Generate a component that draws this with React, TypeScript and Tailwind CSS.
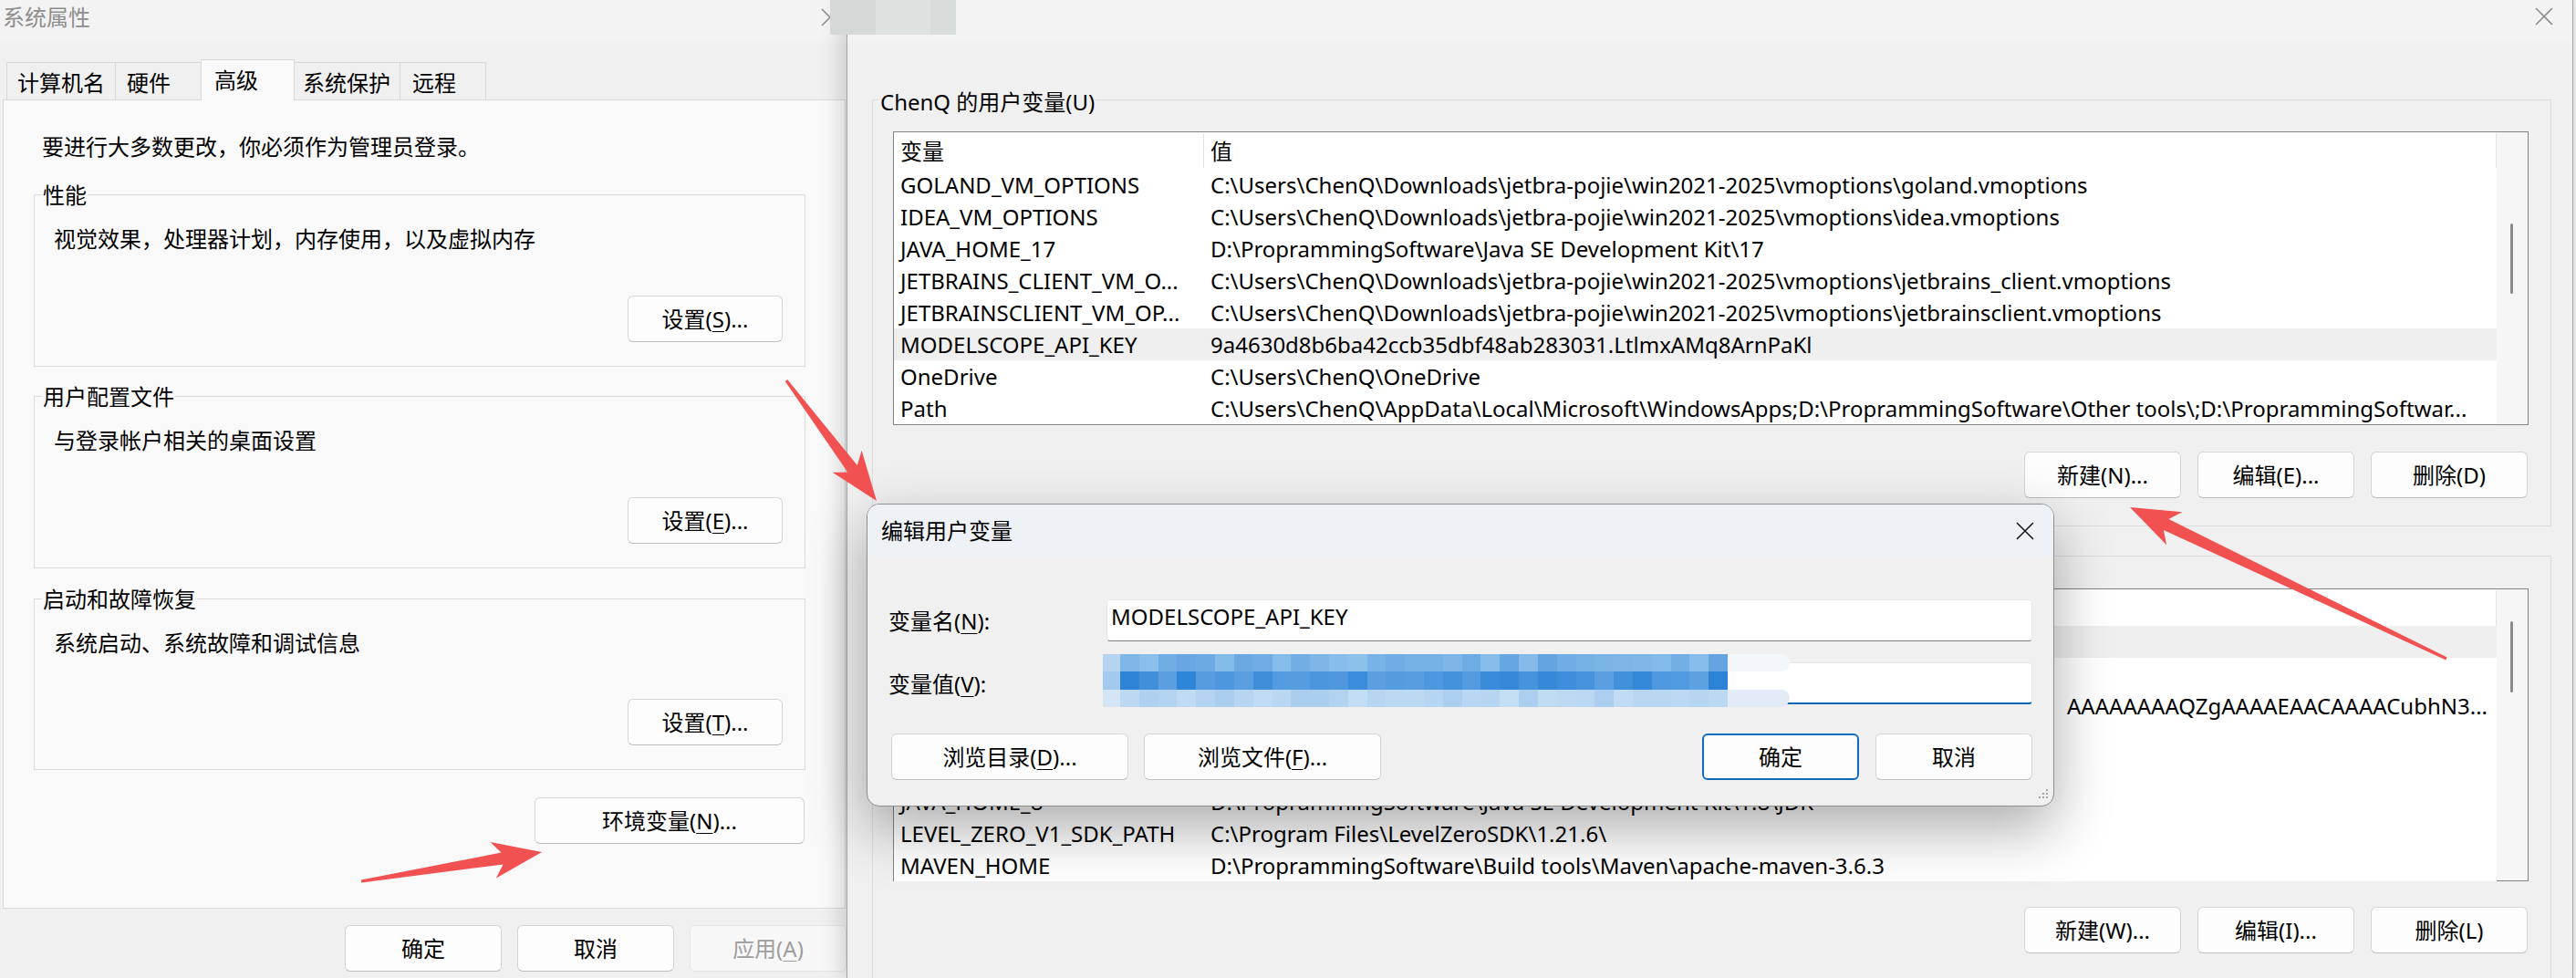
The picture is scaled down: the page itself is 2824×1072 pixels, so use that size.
import React from "react";

type Row = { name: string; value: string; selected?: boolean; alignEnd?: boolean };

const USER_ROWS: Row[] = [
  { name: "GOLAND_VM_OPTIONS", value: "C:\\Users\\ChenQ\\Downloads\\jetbra-pojie\\win2021-2025\\vmoptions\\goland.vmoptions" },
  { name: "IDEA_VM_OPTIONS", value: "C:\\Users\\ChenQ\\Downloads\\jetbra-pojie\\win2021-2025\\vmoptions\\idea.vmoptions" },
  { name: "JAVA_HOME_17", value: "D:\\ProprammingSoftware\\Java SE Development Kit\\17" },
  { name: "JETBRAINS_CLIENT_VM_O...", value: "C:\\Users\\ChenQ\\Downloads\\jetbra-pojie\\win2021-2025\\vmoptions\\jetbrains_client.vmoptions" },
  { name: "JETBRAINSCLIENT_VM_OP...", value: "C:\\Users\\ChenQ\\Downloads\\jetbra-pojie\\win2021-2025\\vmoptions\\jetbrainsclient.vmoptions" },
  { name: "MODELSCOPE_API_KEY", value: "9a4630d8b6ba42ccb35dbf48ab283031.LtlmxAMq8ArnPaKl", selected: true },
  { name: "OneDrive", value: "C:\\Users\\ChenQ\\OneDrive" },
  { name: "Path", value: "C:\\Users\\ChenQ\\AppData\\Local\\Microsoft\\WindowsApps;D:\\ProprammingSoftware\\Other tools\\;D:\\ProprammingSoftwar..." },
];

// System variables: the rows under the edit dialog are hidden in the reference.
const SYS_ROWS: Row[] = [
  { name: "", value: "", selected: true },
  { name: "", value: "" },
  { name: "", value: "AAAAAAAAQZgAAAAEAACAAAACubhN3...", alignEnd: true },
  { name: "", value: "" },
  { name: "", value: "" },
  { name: "JAVA_HOME_8", value: "D:\\ProprammingSoftware\\Java SE Development Kit\\1.8\\JDK" },
  { name: "LEVEL_ZERO_V1_SDK_PATH", value: "C:\\Program Files\\LevelZeroSDK\\1.21.6\\" },
  { name: "MAVEN_HOME", value: "D:\\ProprammingSoftware\\Build tools\\Maven\\apache-maven-3.6.3" },
];

function Ul({ children }: { children: React.ReactNode }) {
  return <span className="underline decoration-1 underline-offset-[4px]">{children}</span>;
}

function CloseX({ color }: { color: string }) {
  return (
    <svg width="20" height="20" viewBox="0 0 20 20" className="block">
      <path d="M1 1L19 19M19 1L1 19" stroke={color} strokeWidth="1.6" fill="none" />
    </svg>
  );
}

type BtnKind = "normal" | "primary" | "disabled";

function Btn({ children, kind = "normal", className = "" }: { children: React.ReactNode; kind?: BtnKind; className?: string }) {
  const k =
    kind === "primary"
      ? "border-2 border-[#0f6cbd] bg-[#fdfdfd] text-black"
      : kind === "disabled"
      ? "border border-[#e6e6e6] bg-[#f7f7f7] text-[#9e9e9e]"
      : "border border-[#d5d5d5] border-b-[#bdbdbd] bg-[#fdfdfd] text-black";
  return (
    <div className={`flex shrink-0 items-center justify-center rounded-[6px] text-[24px] leading-[35px] ${k} ${className}`}>
      {children}
    </div>
  );
}

function PanelGroup({ label, text, button, className }: { label: string; text: string; button: React.ReactNode; className: string }) {
  return (
    <div className={`relative ml-[33px] flex w-[846px] flex-col border border-[#dcdcdc] ${className}`}>
      <span className="absolute left-[8px] top-[-18px] bg-[#f9f9f9] px-[1px] leading-[35px]">{label}</span>
      <p className="pl-[21px] pt-[30px] leading-[35px]">{text}</p>
      <div className="mt-auto flex justify-end pb-[26px] pr-[24px]">{button}</div>
    </div>
  );
}

function SystemProperties() {
  const tabs = [
    { label: "计算机名", cls: "w-[120px] pl-[11px] h-[41px] bg-[#f0f0f0]" },
    { label: "硬件", cls: "w-[95px] pl-[12px] h-[41px] bg-[#f0f0f0] -ml-[1px]" },
    { label: "高级", cls: "w-[103px] pl-[14px] h-[45px] bg-[#f9f9f9] -ml-[1px] -mb-[1px] relative z-10" },
    { label: "系统保护", cls: "w-[117px] pl-[9px] h-[41px] bg-[#f0f0f0] -ml-[1px]" },
    { label: "远程", cls: "w-[95px] pl-[13px] h-[41px] bg-[#f0f0f0] -ml-[1px]" },
  ];
  return (
    <div className="absolute left-0 top-0 flex h-[1072px] w-[930px] flex-col bg-[#f0f0f0] text-[24px]">
      <div className="flex h-[47px] shrink-0 items-start justify-between bg-[#f3f3f3]">
        <span className="pl-[3px] pt-[1px] leading-[35px] text-[#8e8e8e]">系统属性</span>
        <div className="mr-[10px] mt-[9px]">
          <CloseX color="#8e8e8e" />
        </div>
      </div>
      <div className="flex h-[62px] shrink-0 items-end pl-[7px]">
        {tabs.map((t) => (
          <div key={t.label} className={`border-l border-r border-t border-[#dadada] pt-[4px] leading-[35px] ${t.cls}`}>
            {t.label}
          </div>
        ))}
      </div>
      <div className="ml-[3px] flex h-[887px] w-[924px] shrink-0 flex-col border border-[#dadada] bg-[#f9f9f9]">
        <p className="pl-[42px] pt-[33px] leading-[35px]">要进行大多数更改，你必须作为管理员登录。</p>
        <PanelGroup
          className="mt-[35px] h-[189px]"
          label="性能"
          text="视觉效果，处理器计划，内存使用，以及虚拟内存"
          button={<Btn className="h-[51px] w-[170px]">设置(<Ul>S</Ul>)...</Btn>}
        />
        <PanelGroup
          className="mt-[32px] h-[189px]"
          label="用户配置文件"
          text="与登录帐户相关的桌面设置"
          button={<Btn className="h-[51px] w-[170px]">设置(<Ul>E</Ul>)...</Btn>}
        />
        <PanelGroup
          className="mt-[33px] h-[188px]"
          label="启动和故障恢复"
          text="系统启动、系统故障和调试信息"
          button={<Btn className="h-[51px] w-[170px]">设置(<Ul>T</Ul>)...</Btn>}
        />
        <Btn className="ml-[582px] mt-[30px] h-[51px] w-[296px]">
          环境变量(<Ul>N</Ul>)...
        </Btn>
      </div>
      <div className="mt-[18px] flex gap-[17px] pl-[378px]">
        <Btn className="h-[51px] w-[172px]">确定</Btn>
        <Btn className="h-[51px] w-[172px]">取消</Btn>
        <Btn kind="disabled" className="h-[51px] w-[172px]">
          应用(<Ul>A</Ul>)
        </Btn>
      </div>
    </div>
  );
}

function VarList({ rows, thumb, className, header }: { rows: Row[]; thumb: string; className: string; header: boolean }) {
  return (
    <div className={`flex shrink-0 border border-[#838383] bg-white ${className}`}>
      <div className="flex min-w-0 flex-1 flex-col">
        <div className="flex h-[40px] shrink-0">
          <div className="my-[1px] w-[340px] border-r border-[#e3e3e3] pl-[7px] pt-[1px] leading-[37px]">{header ? "变量" : ""}</div>
          <div className="my-[1px] flex-1 border-r border-[#e3e3e3] pl-[7px] pt-[1px] leading-[37px]">{header ? "值" : ""}</div>
        </div>
        {rows.map((r, i) => (
          <div
            key={i}
            className={`flex h-[35px] shrink-0 whitespace-nowrap leading-[35px] ${r.selected ? "bg-[#efefef]" : "bg-white"}`}
          >
            <div className="w-[340px] shrink-0 overflow-hidden pl-[7px]">{r.name}</div>
            {r.alignEnd ? (
              <div className="min-w-0 flex-1 pl-[7px]">
                <div className="ml-[925px] flex justify-end overflow-hidden pr-[10px]">
                  <span className="shrink-0">{r.value}</span>
                </div>
              </div>
            ) : (
              <div className="min-w-0 flex-1 overflow-hidden pl-[7px]">{r.value}</div>
            )}
          </div>
        ))}
      </div>
      <div className="flex w-[34px] shrink-0 flex-col bg-[#f6f6f6]">
        <div className={`ml-[15px] w-[3px] rounded-full bg-[#8a8a8a] ${thumb}`} />
      </div>
    </div>
  );
}

function EnvWindow() {
  return (
    <div className="absolute left-[928px] top-0 z-10 flex h-[1072px] w-[1893px] flex-col border-l border-r border-[#a3a3a3] bg-[#f0f0f0] text-[24px] shadow-[-6px_0_22px_rgba(0,0,0,0.16)]">
      <div className="flex h-[47px] shrink-0 items-start justify-end bg-[#f3f3f3]">
        <div className="mr-[21px] mt-[8px]">
          <CloseX color="#8e8e8e" />
        </div>
      </div>
      <div className="relative ml-[27px] mt-[62px] flex h-[468px] w-[1841px] shrink-0 flex-col border border-[#dcdcdc]">
        <span className="absolute left-[7px] top-[-16px] bg-[#f0f0f0] px-[1px] leading-[35px]">ChenQ 的用户变量(U)</span>
        <VarList header rows={USER_ROWS} thumb="mt-[100px] h-[77px]" className="ml-[22px] mt-[34px] h-[322px] w-[1793px]" />
        <div className="mt-[29px] flex justify-end gap-[18px] pr-[25px]">
          <Btn className="h-[51px] w-[172px]">新建(N)...</Btn>
          <Btn className="h-[51px] w-[172px]">编辑(E)...</Btn>
          <Btn className="h-[51px] w-[172px]">删除(D)</Btn>
        </div>
      </div>
      <div className="relative ml-[27px] mt-[32px] flex h-[600px] w-[1841px] shrink-0 flex-col border border-[#dcdcdc]">
        <VarList header={false} rows={SYS_ROWS} thumb="mt-[35px] h-[78px]" className="ml-[22px] mt-[35px] h-[321px] w-[1793px]" />
        <div className="mt-[28px] flex justify-end gap-[18px] pr-[25px]">
          <Btn className="h-[51px] w-[172px]">新建(W)...</Btn>
          <Btn className="h-[51px] w-[172px]">编辑(I)...</Btn>
          <Btn className="h-[51px] w-[172px]">删除(L)</Btn>
        </div>
      </div>
    </div>
  );
}

function BlurPatch() {
  return (
    <div className="absolute left-[910px] top-0 z-20 flex h-[38px] w-[138px]">
      <div className="w-[50px] bg-[#d4d9d7]" />
      <div className="w-[60px] bg-[#dde1df]" />
      <div className="w-[28px] bg-[#d8dcda]" />
    </div>
  );
}

function Mosaic() {
  let seed = 11;
  const rnd = () => {
    seed = (seed * 9301 + 49297) % 233280;
    return seed / 233280;
  };
  const bands = [
    { a: [98, 163, 224], b: [142, 194, 236], left: "#b6d4f0", right: "#f3f7fb" },
    { a: [42, 130, 214], b: [98, 163, 226], left: "#a4c9ee", right: "#ffffff" },
    { a: [170, 205, 238], b: [196, 222, 244], left: "#d4e5f5", right: "#e3ecf6" },
  ];
  const mix = (a: number[], b: number[], t: number) =>
    `rgb(${Math.round(a[0] + (b[0] - a[0]) * t)},${Math.round(a[1] + (b[1] - a[1]) * t)},${Math.round(a[2] + (b[2] - a[2]) * t)})`;
  return (
    <div className="absolute left-[-5px] top-[-10px] flex h-[58px] w-[753px] flex-col">
      {bands.map((band, i) => (
        <div key={i} className="flex flex-1">
          <div className="w-[19px]" style={{ backgroundColor: band.left }} />
          {Array.from({ length: 32 }).map((_, j) => (
            <div key={j} className="flex-1" style={{ backgroundColor: mix(band.a, band.b, rnd()) }} />
          ))}
          <div className="w-[68px] rounded-r-[18px]" style={{ backgroundColor: band.right }} />
        </div>
      ))}
    </div>
  );
}

function EditDialog() {
  return (
    <div className="absolute left-[950px] top-[552px] z-30 flex h-[332px] w-[1302px] flex-col overflow-hidden rounded-[14px] border border-[#8f8f8f] bg-[#f0f0f0] text-[24px] shadow-[0_24px_64px_rgba(0,0,0,0.33)]">
      <div className="flex h-[57px] shrink-0 items-center justify-between bg-[#eef2f7] pl-[15px] pr-[21px]">
        <span className="leading-[35px]">编辑用户变量</span>
        <CloseX color="#1a1a1a" />
      </div>
      <div className="flex flex-col pl-[23px] pr-[23px]">
        <div className="mt-[47px] flex h-[46px] items-center">
          <div className="w-[239px] shrink-0 leading-[35px]">
            变量名(<Ul>N</Ul>):
          </div>
          <div className="h-full flex-1 rounded-[4px] border border-[#e6e6e6] border-b-[#7d7d7d] bg-white pl-[4px] leading-[36px]">
            MODELSCOPE_API_KEY
          </div>
        </div>
        <div className="mt-[23px] flex h-[46px] items-center">
          <div className="w-[239px] shrink-0 leading-[35px]">
            变量值(<Ul>V</Ul>):
          </div>
          <div className="relative h-full flex-1 rounded-[4px] border border-[#e6e6e6] border-b-2 border-b-[#0063b1] bg-white">
            <Mosaic />
          </div>
        </div>
        <div className="mt-[32px] flex items-center">
          <Btn className="ml-[3px] h-[51px] w-[260px]">
            浏览目录(<Ul>D</Ul>)...
          </Btn>
          <Btn className="ml-[17px] h-[51px] w-[260px]">
            浏览文件(<Ul>F</Ul>)...
          </Btn>
          <div className="flex-1" />
          <Btn kind="primary" className="h-[51px] w-[172px]">
            确定
          </Btn>
          <Btn className="ml-[18px] h-[51px] w-[172px]">取消</Btn>
        </div>
      </div>
      <svg width="14" height="14" viewBox="0 0 14 14" className="absolute bottom-[4px] right-[4px]">
        <rect x="10" y="0" width="2" height="2" fill="#a6a6a6" />
        <rect x="10" y="4" width="2" height="2" fill="#a6a6a6" />
        <rect x="6" y="4" width="2" height="2" fill="#a6a6a6" />
        <rect x="10" y="8" width="2" height="2" fill="#a6a6a6" />
        <rect x="6" y="8" width="2" height="2" fill="#a6a6a6" />
        <rect x="2" y="8" width="2" height="2" fill="#a6a6a6" />
      </svg>
    </div>
  );
}

function arrowPoints(tx: number, ty: number, px: number, py: number) {
  const dx = px - tx;
  const dy = py - ty;
  const len = Math.hypot(dx, dy);
  const ux = dx / len;
  const uy = dy / len;
  const nx = -uy;
  const ny = ux;
  const pt = (along: number, side: number) =>
    `${(px - ux * along + nx * side).toFixed(1)},${(py - uy * along + ny * side).toFixed(1)}`;
  return [pt(len, 1.5), pt(44, 6.5), pt(54, 20), pt(0, 0), pt(54, -20), pt(44, -6.5), pt(len, -1.5)].join(" ");
}

function Arrows() {
  return (
    <svg className="pointer-events-none absolute left-0 top-0 z-40" width="2824" height="1072" viewBox="0 0 2824 1072">
      <polygon points={arrowPoints(862, 417, 961, 549)} fill="#f25151" />
      <polygon points={arrowPoints(2682, 722, 2335, 556)} fill="#f25151" />
      <polygon points={arrowPoints(396, 966, 594, 934)} fill="#f25151" />
    </svg>
  );
}

export default function App() {
  return (
    <div className="relative h-[1072px] w-[2824px] overflow-hidden bg-[#f0f0f0] font-['Noto_Sans','Noto_Sans_CJK_SC',sans-serif] text-black">
      <SystemProperties />
      <EnvWindow />
      <BlurPatch />
      <EditDialog />
      <Arrows />
    </div>
  );
}
